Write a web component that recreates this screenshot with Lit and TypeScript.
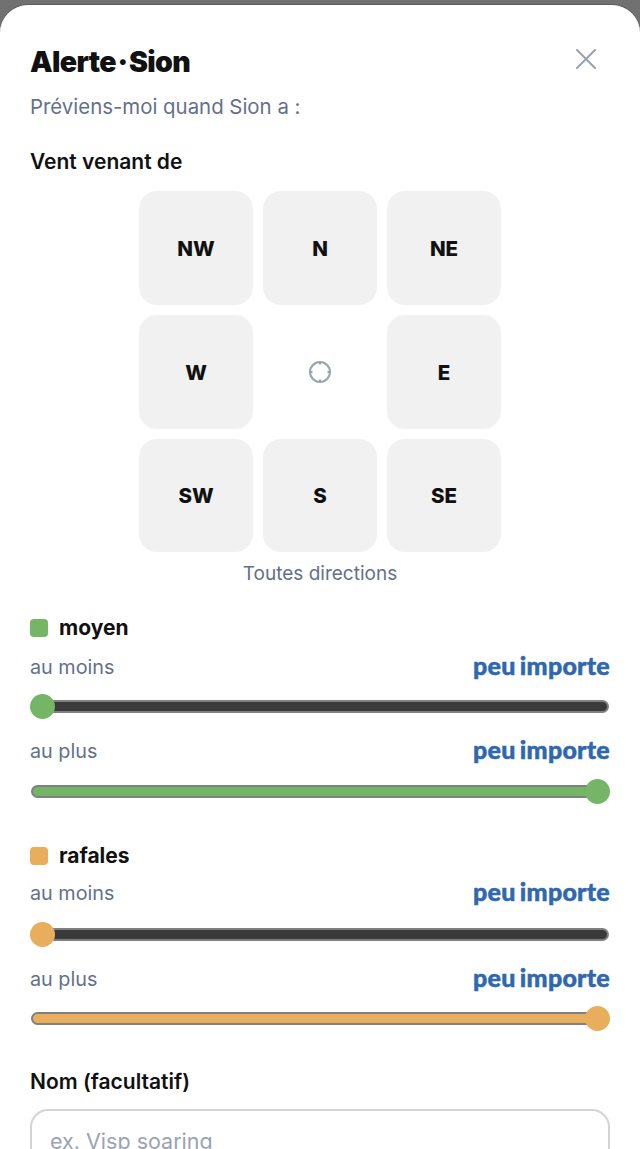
import { LitElement, html, css } from "lit";
import { customElement } from "lit/decorators.js";

const DIRS = ["NW", "N", "NE", "W", "", "E", "SW", "S", "SE"];

@customElement("app-root")
export class AppRoot extends LitElement {
  static styles = css`
    :host { display: block; height: 1149px; overflow: hidden; background: #717171; font-family: Inter, "Liberation Sans", sans-serif; color: #111; }
    .sheet { margin-top: 5px; padding: 0 30px; background: #fff; border-radius: 28px 28px 0 0; height: 1144px; box-sizing: border-box; border-top: 1px solid #fff; box-shadow: 0 -1px 0 #5c5c5c; }
    .head { display: flex; justify-content: space-between; align-items: flex-start; padding-top: 38px; height: 35px; }
    h1 { margin: 0; font-size: 28.5px; line-height: 35px; font-weight: 900; letter-spacing: -0.65px; word-spacing: -3.5px; color: #111; }
    .close { display: block; width: 20px; height: 20px; margin: 5px 14px 0 0; }
    .sub { margin: 15px 0 0; font-size: 20.4px; line-height: 26px; color: #64708a; }
    .label { font-size: 21px; line-height: 26px; font-weight: 600; color: #111; }
    .wind { margin-top: 29px; }
    .grid { margin: 16px auto 0; width: 362px; display: grid; grid-template-columns: repeat(3, 1fr); grid-template-rows: 114px 114px 113px; gap: 10px; }
    .cell { display: flex; align-items: center; justify-content: center; background: #f1f1f1; border-radius: 18px; font-size: 20.5px; font-weight: 850; color: #111; }
    .center { background: none; }
    .all { margin-top: 10px; text-align: center; font-size: 19px; line-height: 24px; color: #64708a; }
    .section { margin-top: 29px; --r1: 13px; --t1: 20px; --r2: 25px; --t2: 21px; }
    .section.second { margin-top: 45px; --r1: 11px; --t1: 22px; --r2: 25px; --t2: 20px; }
    .title { display: flex; align-items: center; gap: 11px; font-size: 21px; line-height: 26px; font-weight: 700; color: #111; }
    .swatch { width: 18px; height: 18px; border-radius: 4px; background: var(--c); }
    .row { display: flex; justify-content: space-between; align-items: center; height: 26px; margin-top: var(--r1); font-size: 19.8px; color: #64708a; }
    .row.again { margin-top: var(--r2); }
    .any { margin-bottom: 4px; font-family: Lato, Inter, sans-serif; font-size: 25px; font-weight: 900; word-spacing: -2px; letter-spacing: 0.25px; color: #2f68ae; -webkit-text-stroke: 0.5px #2f68ae; }
    .track { position: relative; margin: var(--t1) 1px 0; height: 13px; box-sizing: border-box; border: 2px solid #808080; border-radius: 7px; }
    .track.off { background: #3a3a3a; }
    .track.on { margin-top: var(--t2); background: var(--c); }
    .thumb { position: absolute; top: -8px; width: 25px; height: 25px; border-radius: 50%; background: var(--c); }
    .thumb.min { left: -3px; }
    .thumb.max { right: -3px; }
    .name { margin-top: 44px; }
    .input { margin-top: 14px; height: 64px; box-sizing: border-box; padding: 17px 18px; border: 2px solid #d2d4d8; border-radius: 18px; font-size: 21.5px; line-height: 26px; color: #9aa3b2; }
  `;

  private slider(color: string, label: string) {
    return html`
      <div class="title" style="--c:${color}"><span class="swatch"></span>${label}</div>
      <div class="row"><span>au moins</span><span class="any">peu importe</span></div>
      <div class="track off" style="--c:${color}"><span class="thumb min"></span></div>
      <div class="row again"><span>au plus</span><span class="any">peu importe</span></div>
      <div class="track on" style="--c:${color}"><span class="thumb max"></span></div>
    `;
  }

  render() {
    return html`
      <div class="sheet">
        <div class="head">
          <h1>Alerte · Sion</h1>
          <svg class="close" viewBox="0 0 20 20" fill="none" stroke="#98a2b3" stroke-width="2" stroke-linecap="round"><path d="M1 1 19 19M19 1 1 19"/></svg>
        </div>
        <p class="sub">Préviens-moi quand Sion a :</p>
        <div class="wind label">Vent venant de</div>
        <div class="grid">
          ${DIRS.map((d) => d
            ? html`<div class="cell">${d}</div>`
            : html`<div class="cell center"><svg width="24" height="24" viewBox="0 0 24 24" fill="none" stroke="#98a2b3" stroke-width="2"><circle cx="12" cy="12" r="10"/><path d="M12 2v2.5M12 19.5V22M2 12h2.5M19.5 12H22"/></svg></div>`)}
        </div>
        <div class="all">Toutes directions</div>
        <div class="section">${this.slider("#74b566", "moyen")}</div>
        <div class="section second">${this.slider("#e8ae5c", "rafales")}</div>
        <div class="name label">Nom (facultatif)</div>
        <div class="input">ex. Visp soaring</div>
      </div>
    `;
  }
}
